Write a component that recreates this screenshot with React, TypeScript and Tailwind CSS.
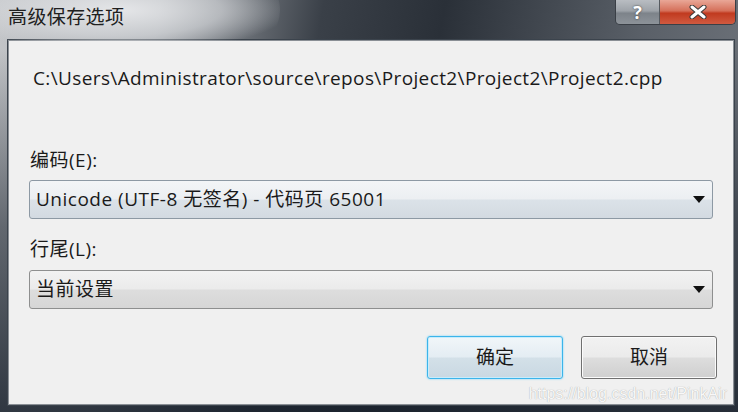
import React from 'react';

const font = '"Open Sans", "Noto Sans CJK SC", sans-serif';

function Caret() {
  return (
    <svg width="12" height="7" viewBox="0 0 12 7" className="shrink-0">
      <path d="M0 0 H12 L6 7 Z" fill="#111" />
    </svg>
  );
}

function Select({ value, tint }: { value: string; tint: 'blue' | 'grey' }) {
  const bg =
    tint === 'blue'
      ? 'bg-[linear-gradient(to_bottom,#f3f5f7_0%,#eceff2_48%,#dbe2e8_52%,#d3dae1_100%)] border-[#8d99a4]'
      : 'bg-[linear-gradient(to_bottom,#f2f2f2_0%,#ebebeb_48%,#dddddd_52%,#d6d6d6_100%)] border-[#8e8f8f]';
  return (
    <div className={`mx-[20px] h-[39px] rounded-[3px] border flex items-center pl-[6px] pr-[7px] ${bg}`}>
      <span className="flex-1 text-[19px] tracking-[0.5px] text-[#1a1a1a] leading-none">{value}</span>
      <Caret />
    </div>
  );
}

export default function App() {
  return (
    <div
      className="w-[738px] h-[412px] flex flex-col overflow-hidden bg-[linear-gradient(to_bottom,rgba(25,33,44,0)_12%,rgba(25,33,44,0.55)_55%,rgba(25,33,44,0.85)_100%),linear-gradient(100deg,#c3c5c8_0%,#a4a8ad_20%,#3a4048_40%,#2a3038_55%,#5a6068_80%,#73787f_100%)]"
      style={{ fontFamily: font }}
    >
      {/* Title bar */}
      <div className="h-[39px] flex items-start shrink-0 relative">
        <div className="absolute left-[-40px] top-[-30px] w-[320px] h-[80px] rounded-full bg-[radial-gradient(ellipse_at_center,rgba(235,236,238,0.9)_0%,rgba(220,222,225,0.6)_45%,rgba(200,202,205,0)_75%)]" />
        <span className="relative pl-[8px] pt-[8px] text-[19px] tracking-[0.4px] text-[#202020] leading-none">高级保存选项</span>
        <div className="flex-1" />
        <div className="relative flex mr-[2px] h-[25px] rounded-b-[5px] border border-t-0 border-[#3a3f46] overflow-hidden">
          <div className="w-[44px] h-full flex items-center justify-center bg-[linear-gradient(to_bottom,#b9bdc2_0%,#9ea3a9_45%,#7d838a_55%,#8d9399_100%)] border-r border-[#555a60]">
            <span className="text-[18px] font-bold text-white leading-none [text-shadow:0_0_2px_#333]">?</span>
          </div>
          <div className="w-[75px] h-full flex items-center justify-center bg-[linear-gradient(to_bottom,#e9a797_0%,#d5705a_45%,#c13a1f_55%,#d05a40_100%)]">
            <svg width="18" height="14" viewBox="0 0 18 14">
              <path d="M3 2 L15 12 M15 2 L3 12" stroke="#3a3a3a" strokeWidth="5" strokeLinecap="round" />
              <path d="M3 2 L15 12 M15 2 L3 12" stroke="#ffffff" strokeWidth="3" strokeLinecap="round" />
            </svg>
          </div>
        </div>
      </div>

      {/* Client area */}
      <div className="flex-1 ml-[7px] mr-[3px] mb-[6px] border border-[#3b434c] bg-[#8a8f95] p-px">
        <div className="h-full bg-[#f0f0f0] flex flex-col relative">
          <div className="pl-[24px] pt-[28px] text-[19px] tracking-[0.38px] text-[#1a1a1a] leading-none">
            C:\Users\Administrator\source\repos\Project2\Project2\Project2.cpp
          </div>

          <div className="pl-[21px] mt-[63px] text-[19px] tracking-[0.5px] text-[#1a1a1a] leading-none">编码(E):</div>
          <div className="mt-[10px]">
            <Select value="Unicode (UTF-8 无签名) - 代码页 65001" tint="blue" />
          </div>

          <div className="pl-[21px] mt-[21px] text-[19px] tracking-[0.5px] text-[#1a1a1a] leading-none">行尾(L):</div>
          <div className="mt-[11px]">
            <Select value="当前设置" tint="grey" />
          </div>

          <div className="flex justify-end gap-[18px] mr-[16px] mt-[27px]">
            <button className="w-[136px] h-[43px] rounded-[3px] border border-[#3cb4ea] shadow-[0_0_2px_#62d0ff,inset_0_0_0_1px_#c8ecfb] bg-[linear-gradient(to_bottom,#f1f6f9_0%,#e4edf3_48%,#d3e0e8_52%,#c9d8e2_100%)] text-[19px] text-[#1a1a1a]">
              确定
            </button>
            <button className="w-[136px] h-[43px] rounded-[3px] border border-[#707070] shadow-[inset_0_0_0_1px_#fbfbfb] bg-[linear-gradient(to_bottom,#f2f2f2_0%,#ebebeb_48%,#dddddd_52%,#cfcfcf_100%)] text-[19px] text-[#1a1a1a]">
              取消
            </button>
          </div>

          <span
            className="absolute right-[6px] bottom-[2px] text-[16px] text-[#f8f8f8] leading-none [text-shadow:0_0_1px_#9a9a9a]"
            style={{ fontFamily: '"Liberation Sans", sans-serif' }}
          >
            https://blog.csdn.net/PinkAir
          </span>
        </div>
      </div>
    </div>
  );
}
